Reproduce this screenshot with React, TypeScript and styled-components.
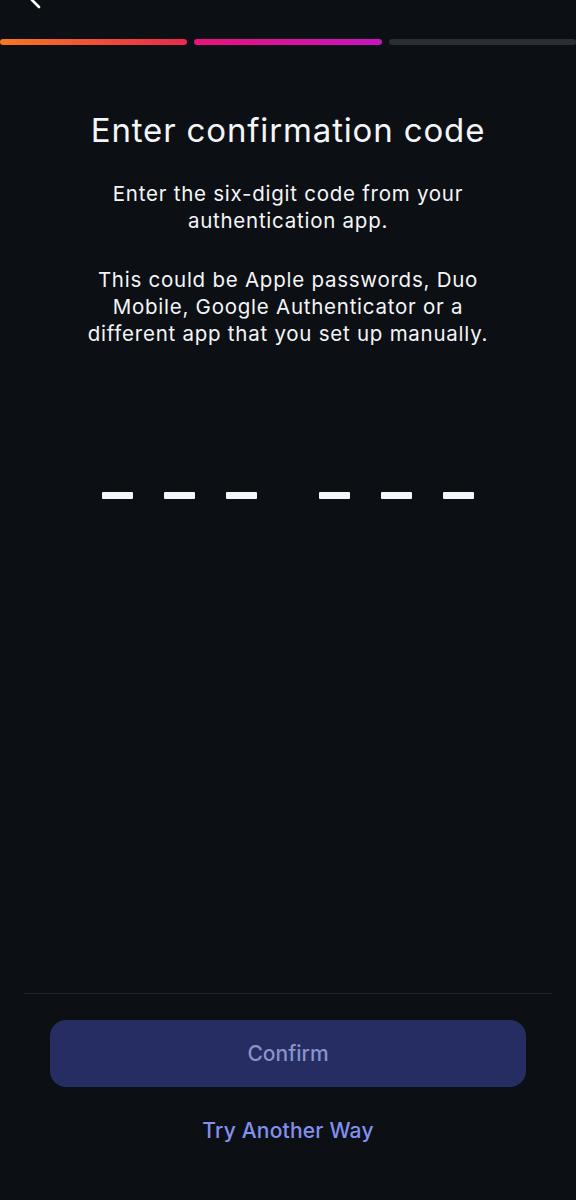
import React from "react";
import styled, { createGlobalStyle } from "styled-components";

const GlobalStyle = createGlobalStyle`
  html, body {
    margin: 0;
    padding: 0;
    background: #0c1015;
  }
  * {
    box-sizing: border-box;
  }
`;

// Whole screen, column layout so the footer sits at the bottom
const Page = styled.div`
  min-height: 1200px;
  display: flex;
  flex-direction: column;
  background: #0c1015;
  color: #f4f5f7;
  font-family: Inter, "Noto Sans", "Liberation Sans", sans-serif;
`;

const TopBar = styled.div`
  height: 39px;
  overflow: hidden;
  display: flex;
  align-items: flex-end;
  padding-left: 20px;
`;

const BackButton = styled.button`
  background: none;
  border: none;
  padding: 0;
  margin-bottom: 25px;
  color: #ffffff;
  display: flex;
`;

// Step progress
const Progress = styled.div`
  display: flex;
  gap: 7px;
  height: 6px;
`;

const Step = styled.div<{ $fill: string }>`
  flex: 1;
  border-radius: 3px;
  background: ${(p) => p.$fill};
`;

const Content = styled.main`
  display: flex;
  flex-direction: column;
  align-items: center;
  padding: 0 24px;
  text-align: center;
`;

const Title = styled.h1`
  margin: 65px 0 0;
  font-size: 33px;
  line-height: 40px;
  font-weight: 400;
  letter-spacing: 0.85px;
`;

const Text = styled.p<{ $gap: number }>`
  margin: ${(p) => p.$gap}px 0 0;
  max-width: 410px;
  font-size: 20.5px;
  line-height: 27px;
  font-weight: 400;
  letter-spacing: 0.75px;
`;

// Six-digit code placeholder
const CodeRow = styled.div`
  display: flex;
  align-items: center;
  gap: 62px;
  margin-top: 145px;
`;

const CodeGroup = styled.div`
  display: flex;
  gap: 31px;
`;

const Dash = styled.span`
  display: block;
  width: 31px;
  height: 7px;
  background: #f4f6fa;
  border-radius: 1px;
`;

const Spacer = styled.div`
  flex: 1;
`;

const Footer = styled.footer`
  display: flex;
  flex-direction: column;
  align-items: center;
  padding: 0 50px 55px;
`;

const Divider = styled.hr`
  align-self: stretch;
  margin: 0 -26px 26px;
  border: none;
  border-top: 1px solid #22262c;
`;

const ConfirmButton = styled.button`
  width: 100%;
  height: 67px;
  border: none;
  border-radius: 16px;
  background: #252d63;
  color: #8a93c9;
  font-family: inherit;
  font-size: 21px;
  font-weight: 500;
`;

const LinkButton = styled.button`
  margin-top: 30px;
  background: none;
  border: none;
  padding: 0;
  color: #8290f0;
  font-family: inherit;
  font-size: 21px;
  line-height: 28px;
  font-weight: 500;
  letter-spacing: 0.2px;
`;

const steps = [
  "linear-gradient(90deg, #f6791d, #e9284f)",
  "linear-gradient(90deg, #e9137a, #c813c2)",
  "#2a2d33",
];

const App: React.FC = () => {
  return (
    <Page>
      <GlobalStyle />
      <TopBar>
        <BackButton aria-label="Back">
          <svg width="24" height="40" viewBox="0 0 24 40" fill="none">
            <path
              d="M19 5L5 19L19 33"
              stroke="currentColor"
              strokeWidth="2.6"
              strokeLinecap="round"
              strokeLinejoin="round"
            />
          </svg>
        </BackButton>
      </TopBar>
      <Progress>
        {steps.map((fill, i) => (
          <Step key={i} $fill={fill} />
        ))}
      </Progress>
      <Content>
        <Title>Enter confirmation code</Title>
        <Text $gap={30}>Enter the six-digit code from your authentication app.</Text>
        <Text $gap={32}>
          This could be Apple passwords, Duo Mobile, Google Authenticator or a
          different app that you set up manually.
        </Text>
        <CodeRow>
          {[0, 1].map((g) => (
            <CodeGroup key={g}>
              <Dash />
              <Dash />
              <Dash />
            </CodeGroup>
          ))}
        </CodeRow>
      </Content>
      <Spacer />
      <Footer>
        <Divider />
        <ConfirmButton disabled>Confirm</ConfirmButton>
        <LinkButton>Try Another Way</LinkButton>
      </Footer>
    </Page>
  );
};

export default App;
